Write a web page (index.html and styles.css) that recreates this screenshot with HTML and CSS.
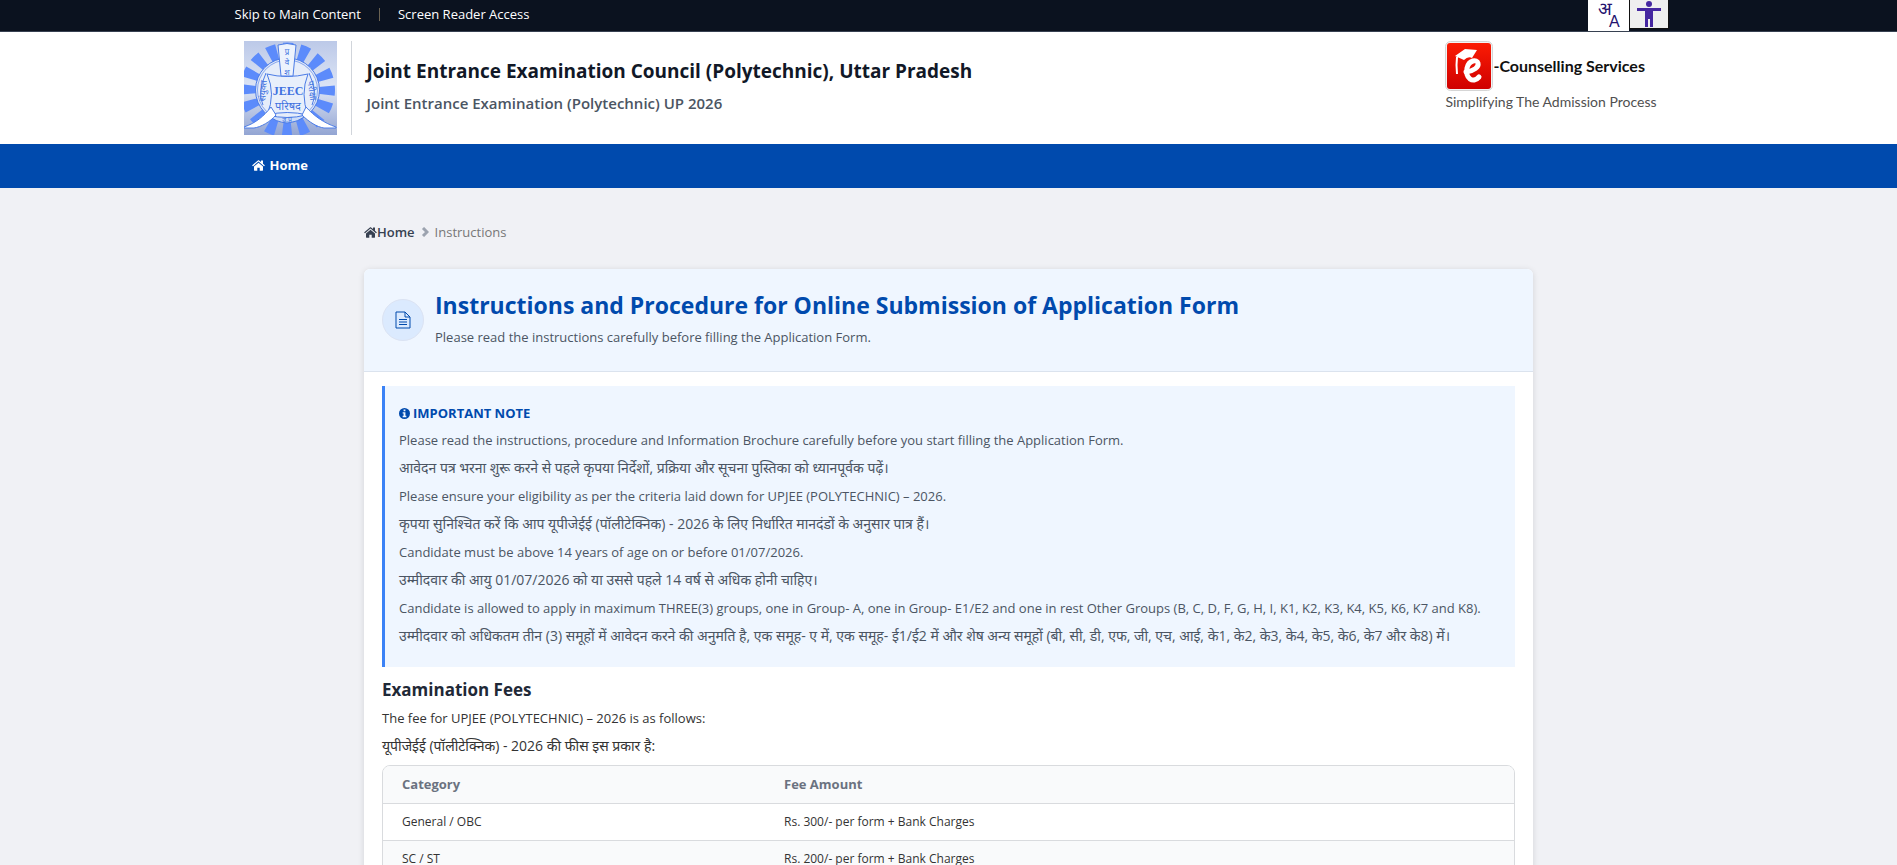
FILE: index.html
```html
<!DOCTYPE html>
<html lang="en">
<head>
  <meta charset="UTF-8" />
  <meta name="viewport" content="width=device-width, initial-scale=1.0" />
  <title>Instructions | Joint Entrance Examination (Polytechnic) UP 2026</title>
  <link rel="stylesheet" href="styles.css">
</head>
<body>
  <svg class="sprite" aria-hidden="true">
    <symbol id="icon-home" viewBox="0 0 26 22">
      <path fill="currentColor" d="M13 5.500 22 13v7.400c0 .6-.4 1-1 1h-5.600v-6h-4.800v6H5c-.6 0-1-.4-1-1V13z"/>
      <path fill="currentColor" d="m25.600 11.100-.9 1.100c-.2.3-.6.3-.8.1L13 3.200 2.100 12.300c-.3.2-.6.2-.8-.1l-.9-1.100c-.2-.2-.2-.6.1-.8L11.800.900c.7-.6 1.700-.6 2.400 0L18 4.100V1.600c0-.4.3-.6.6-.6h2.800c.4 0 .6.2.6.6v5.800l3.500 2.900c.3.2.3.6.1.8z"/>
    </symbol>
  </svg>

  <!-- Top bar -->
  <div class="topbar">
    <div class="wrap topbar-inner">
      <div class="topbar-links">
        <a href="#main">Skip to Main Content</a>
        <span class="divider"></span>
        <a href="#">Screen Reader Access</a>
      </div>
      <div class="topbar-tools">
        <button type="button" class="tool tool-lang" aria-label="Change language">
          <svg viewBox="0 0 41 31" width="41" height="31" aria-hidden="true">
            <text class="lang-hi" x="10" y="15">अ</text>
            <text class="lang-en" x="21" y="27">A</text>
          </svg>
        </button>
        <button type="button" class="tool tool-access" aria-label="Accessibility options">
          <svg viewBox="0 0 26 27" width="26" height="27" aria-hidden="true">
            <circle cx="13" cy="4" r="3"/>
            <path d="M1 8h24v3h-8v16h-3v-8h-2v8H9V11H1z"/>
          </svg>
        </button>
      </div>
    </div>
  </div>

  <!-- Header -->
  <header class="header">
    <div class="wrap header-inner">
      <a href="#" class="logo" aria-label="JEEC home">
        <svg viewBox="0 0 93 94" width="93" height="94">
          <defs>
            <linearGradient id="logoBg" x1="0" y1="0" x2="0" y2="1">
              <stop offset="0" stop-color="#bcc9e8"/>
              <stop offset=".5" stop-color="#dde5f5"/>
              <stop offset="1" stop-color="#93a5d3"/>
            </linearGradient>
          </defs>
          <rect width="93" height="94" fill="url(#logoBg)"/>
          <circle cx="43.500" cy="49" r="38" fill="none" stroke="#5c8bfb" stroke-width="19" stroke-dasharray="8.600 6.320" stroke-dashoffset="4"/>
          <circle cx="43.500" cy="49" r="32" fill="#dbe5f8" stroke="#4c7ce6"/>
          <circle cx="43.500" cy="49" r="30" fill="#e6edfa" stroke="#8aa8ee"/>
          <path fill="#cddcf8" stroke="#4c7ce6" d="M24 74q19 5 38 0-7 7-19 8-12-1-19-8z"/>
          <path fill="#e8effb" stroke="#4c7ce6" d="M23 33q20 5 41 0-8 20 0 41-21-5-41 0 9-21 0-41z"/>
          <path fill="#fff" stroke="#4c7ce6" d="M0 86C12 82 20 75 27 66l5 8C26 81 17 86 10 87H0zM92 86C80 82 70 75 62 66l-4 8c7 7 15 12 22 13h12z"/>
          <path fill="#edf3fd" stroke="#4c7ce6" d="M34 4q9-3 18 0l-3 31H37z"/>
          <path fill="none" stroke="#4c7ce6" d="M22 32q-9 20-3 32M65 32q9 20 3 32"/>
          <g class="logo-text">
            <text x="43" y="14" font-size="8">प्र</text>
            <text x="43" y="24" font-size="8">वे</text>
            <text x="43" y="34" font-size="8">श</text>
            <text x="44" y="69" font-size="11">परिषद</text>
            <text x="44" y="81" font-size="7">उ.प्र.</text>
            <text transform="translate(22 50) rotate(-86)" font-size="9">संयुक्त</text>
            <text transform="translate(65 50) rotate(82)" font-size="9">परीक्षा</text>
          </g>
          <text class="logo-name" x="44" y="54">JEEC</text>
        </svg>
      </a>
      <div class="site-name">
        <p class="site-title">Joint Entrance Examination Council (Polytechnic), Uttar Pradesh</p>
        <p class="site-subtitle">Joint Entrance Examination (Polytechnic) UP 2026</p>
      </div>
      <div class="ecounselling">
        <div class="ecounselling-top">
          <svg viewBox="0 0 48 50" width="48" height="50" aria-hidden="true">
            <defs>
              <linearGradient id="redBg" x1="0" y1="0" x2="0" y2="1">
                <stop offset="0" stop-color="#fb1c04"/>
                <stop offset="1" stop-color="#cf0000"/>
              </linearGradient>
            </defs>
            <rect x=".5" y=".5" width="47" height="49" rx="5" fill="#f3f3f3" stroke="#d5d5d5"/>
            <rect x="2" y="2" width="44" height="46" rx="3" fill="url(#redBg)"/>
            <path fill="none" stroke="#fff" stroke-width="5" stroke-linecap="round" d="M21 31c8-1 13-5 12-9s-9-3-11 5c-2 10 6 16 12 9"/>
            <path fill="#fff" d="M10 15 20 8l12 1-5 8q-4-2-8 2z"/>
            <path fill="none" stroke="#fff" stroke-width="2" d="M12 16q-1 8 0 17"/>
          </svg>
          <span>-Counselling Services</span>
        </div>
        <p>Simplifying The Admission Process</p>
      </div>
    </div>
  </header>

  <nav class="navbar">
    <div class="wrap">
      <a href="#" class="nav-link"><svg class="icon"><use href="#icon-home"/></svg>Home</a>
    </div>
  </nav>

  <main id="main" class="content">
    <nav class="breadcrumb" aria-label="Breadcrumb">
      <a href="#"><svg class="icon"><use href="#icon-home"/></svg>Home</a>
      <svg class="chevron" viewBox="0 0 8 10" aria-hidden="true"><path d="m2 1 4 4-4 4"/></svg>
      <span>Instructions</span>
    </nav>

    <section class="card">
      <div class="card-header">
        <div class="card-icon">
          <svg viewBox="0 0 16 18" width="16" height="18" aria-hidden="true">
            <path d="M1 1h9l5 5v11H1zM10 1v5h5M4 8.500h8M4 11h8M4 13.500h8"/>
          </svg>
        </div>
        <div>
          <h1>Instructions and Procedure for Online Submission of Application Form</h1>
          <p>Please read the instructions carefully before filling the Application Form.</p>
        </div>
      </div>

      <div class="card-body">
        <div class="note">
          <h2>
            <svg viewBox="0 0 12 12" width="11" height="11" aria-hidden="true">
              <circle cx="6" cy="6" r="6" fill="currentColor"/>
              <path fill="#eff6ff" d="M5 1.500h2v2H5zM4 4.500h3v4h1V10H4V8.500h1V6H4z"/>
            </svg>
            IMPORTANT NOTE
          </h2>
          <p>Please read the instructions, procedure and Information Brochure carefully before you start filling the Application Form.</p>
          <p lang="hi">आवेदन पत्र भरना शुरू करने से पहले कृपया निर्देशों, प्रक्रिया और सूचना पुस्तिका को ध्यानपूर्वक पढ़ें।</p>
          <p>Please ensure your eligibility as per the criteria laid down for UPJEE (POLYTECHNIC) – 2026.</p>
          <p lang="hi">कृपया सुनिश्चित करें कि आप यूपीजेईई (पॉलीटेक्निक) - 2026 के लिए निर्धारित मानदंडों के अनुसार पात्र हैं।</p>
          <p>Candidate must be above 14 years of age on or before 01/07/2026.</p>
          <p lang="hi">उम्मीदवार की आयु 01/07/2026 को या उससे पहले 14 वर्ष से अधिक होनी चाहिए।</p>
          <p>Candidate is allowed to apply in maximum THREE(3) groups, one in Group- A, one in Group- E1/E2 and one in rest Other Groups (B, C, D, F, G, H, I, K1, K2, K3, K4, K5, K6, K7 and K8).</p>
          <p lang="hi">उम्मीदवार को अधिकतम तीन (3) समूहों में आवेदन करने की अनुमति है, एक समूह- ए में, एक समूह- ई1/ई2 में और शेष अन्य समूहों (बी, सी, डी, एफ, जी, एच, आई, के1, के2, के3, के4, के5, के6, के7 और के8) में।</p>
        </div>

        <h2 class="section-title">Examination Fees</h2>
        <p>The fee for UPJEE (POLYTECHNIC) – 2026 is as follows:</p>
        <p lang="hi">यूपीजेईई (पॉलीटेक्निक) - 2026 की फीस इस प्रकार है:</p>

        <div class="table-box">
          <table class="fee-table">
            <thead>
              <tr><th scope="col">Category</th><th scope="col">Fee Amount</th></tr>
            </thead>
            <tbody>
              <tr><td>General / OBC</td><td>Rs. 300/- per form + Bank Charges</td></tr>
              <tr><td>SC / ST</td><td>Rs. 200/- per form + Bank Charges</td></tr>
            </tbody>
          </table>
        </div>
      </div>
    </section>
  </main>
</body>
</html>
```
FILE: styles.css
```css
* { box-sizing: border-box; }

html { overflow: hidden; }
body {
  margin: 0;
  background: #f0f1f5;
  color: #333;
  font: 13px/28px "Open Sans", "Noto Sans", sans-serif;
}
h1, h2, p { margin: 0; }
p:lang(hi) { font-size: 14px; }
a { color: inherit; text-decoration: none; }
svg { display: block; }

.sprite { display: none; }
.icon { width: 13px; height: 11px; }
.wrap { max-width: 1440px; margin: 0 auto; }

/* Top bar */
.topbar {
  background: #0b121f;
  border-bottom: 1px solid #374151;
  color: #fff;
}
.topbar-inner {
  display: flex;
  justify-content: space-between;
  height: 31px;
  padding-left: 6px;
}
.topbar-links {
  display: flex;
  align-items: center;
  gap: 18px;
  height: 28px;
}
.divider { width: 1px; height: 13px; background: #6b6353; }
.topbar-tools { display: flex; }
.tool { padding: 0; border: 0; background: #fff; cursor: pointer; }
.tool-lang { fill: #24126e; }
.lang-hi { font-size: 18px; }
.lang-en { font-size: 16px; }
.tool-access {
  display: flex;
  justify-content: center;
  width: 40px;
  height: 29px;
  border: solid #111;
  border-width: 0 1px 1px;
  background: #efefef;
  fill: #4527a0;
}

/* Header */
.header { background: #fff; }
.header-inner {
  display: flex;
  padding: 9px 12px 9px 15px;
}
.logo { padding-right: 14px; border-right: 1px solid #d1d5db; }
.logo-text { fill: #3f72e0; text-anchor: middle; }
.logo-name {
  fill: #3f72e0;
  font: bold 12px "Liberation Serif", serif;
  text-anchor: middle;
}
.site-name { flex: 1; padding: 16px 0 0 15px; }
.site-title {
  color: #111827;
  font-size: 19px;
  font-weight: 700;
}
.site-subtitle {
  margin-top: 4px;
  color: #4b5563;
  font-size: 15px;
  font-weight: 600;
}
.ecounselling { color: #505050; font: 14px/22px Lato, sans-serif; }
.ecounselling-top {
  display: flex;
  align-items: center;
  color: #111;
  font-size: 16px;
  font-weight: 700;
}

/* Navigation */
.navbar { background: #004aad; color: #fff; }
.nav-link {
  display: inline-flex;
  align-items: center;
  gap: 5px;
  padding: 7px 23px 9px;
  font-weight: 700;
  vertical-align: top;
}

.content { max-width: 1169px; margin: 0 auto; padding-top: 30px; }

.breadcrumb {
  display: flex;
  align-items: center;
  gap: 6px;
  margin-bottom: 23px;
  color: #777;
}
.breadcrumb a {
  display: flex;
  align-items: center;
  color: #374151;
  font-weight: 600;
}
.chevron { width: 8px; height: 10px; fill: none; stroke: #9ca3af; stroke-width: 3; }

/* Card */
.card {
  border-radius: 6px;
  background: #fff;
  box-shadow: 0 1px 6px rgba(0, 0, 0, 0.12);
}
.card-header {
  display: flex;
  align-items: center;
  gap: 11px;
  padding: 19px 18px;
  border-bottom: 1px solid #dbe3ee;
  border-radius: 6px 6px 0 0;
  background: #eff6ff;
}
.card-header h1 {
  color: #004aad;
  font-size: 23px;
  font-weight: 700;
  line-height: 35px;
}
.card-header p { padding-bottom: 1px; color: #4b5563; }
.card-icon {
  display: flex;
  align-items: center;
  justify-content: center;
  width: 42px;
  height: 42px;
  border: 1px solid #dbe3f3;
  border-radius: 50%;
  background: #dbeafe;
}
.card-icon svg { fill: none; stroke: #004aad; }
.card-body { padding: 14px 18px; }

.note {
  padding: 15px 14px 17px;
  border-left: 3px solid #3b82f6;
  background: #eff6ff;
  color: #4b5563;
}
.note h2 {
  display: flex;
  align-items: center;
  gap: 3px;
  color: #004aad;
  font-size: 13px;
  font-weight: 700;
  line-height: 25px;
}

.section-title {
  margin-top: 9px;
  color: #1f2937;
  font-size: 17px;
  font-weight: 700;
}

/* Fees table */
.table-box {
  margin-top: 5px;
  overflow: hidden;
  border: 1px solid #d9dbde;
  border-radius: 8px;
}
.fee-table {
  width: 100%;
  border-collapse: collapse;
  table-layout: fixed;
}
.fee-table th,
.fee-table td {
  padding: 4px 19px;
  text-align: left;
}
.fee-table th {
  padding-bottom: 5px;
  background: #f9fafb;
  color: #6b7280;
  font-weight: 700;
}
.fee-table th:first-child { width: 382px; }
.fee-table td { border-top: 1px solid #d9dbde; font-size: 12px; }
.fee-table tbody tr:nth-child(even) { background: #f9fafb; }
```
